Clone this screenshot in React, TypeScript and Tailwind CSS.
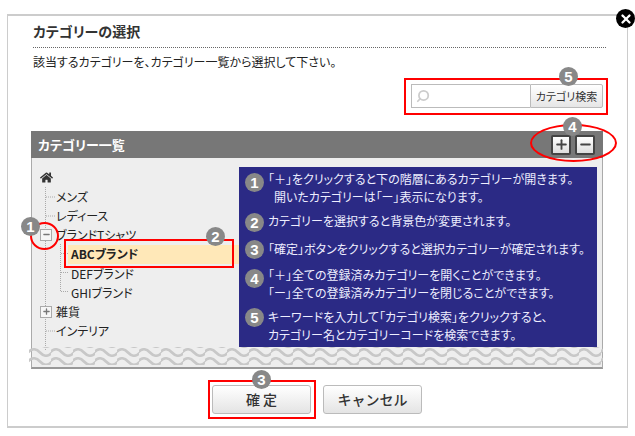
import { FaHome } from "react-icons/fa";
import { Minus, Plus, Search, X } from "lucide-react";

const font = "font-['Noto_Sans_CJK_JP','Liberation_Sans',sans-serif]";

const treeRows = [
  { label: "メンズ", depth: 0 },
  { label: "レディース", depth: 0 },
  { label: "ブランドTシャツ", depth: 0, toggle: "minus" },
  { label: "ABCブランド", depth: 1, selected: true },
  { label: "DEFブランド", depth: 1 },
  { label: "GHIブランド", depth: 1 },
  { label: "雑貨", depth: 0, toggle: "plus" },
  { label: "インテリア", depth: 0 },
];

const helpItems = [
  {
    no: 1,
    wrap: "mt-0",
    badge: "mt-[3px]",
    lines: ["「＋」をクリックすると下の階層にあるカテゴリーが開きます。", "\u2002開いたカテゴリーは「ー」表示になります。"],
  },
  { no: 2, wrap: "mt-[6px]", badge: "mt-px", lines: ["カテゴリーを選択すると背景色が変更されます。"] },
  { no: 3, wrap: "mt-[8px]", badge: "mt-0", lines: ["「確定」ボタンをクリックすると選択カテゴリーが確定されます。"] },
  {
    no: 4,
    wrap: "mt-[7px]",
    badge: "mt-[3px]",
    lines: ["「＋」全ての登録済みカテゴリーを開くことができます。", "「ー」全ての登録済みカテゴリーを閉じることができます。"],
  },
  {
    no: 5,
    wrap: "mt-[6px]",
    badge: "mt-0",
    lines: ["キーワードを入力して「カテゴリ検索」をクリックすると、", "カテゴリー名とカテゴリーコードを検索できます。"],
  },
];

const Badge = ({ no, className }: { no: number; className: string }) => (
  <span
    className={`flex h-[19px] w-[19px] shrink-0 items-center justify-center rounded-full bg-[#888] text-[15px] leading-none font-bold text-white font-['Liberation_Sans',sans-serif] ${className}`}
  >
    {no}
  </span>
);

const Waves = () => (
  <svg className="absolute bottom-0 left-[-3px]" width="574" height="20" aria-hidden="true">
    <defs>
      <pattern id="wave" width="22" height="9" patternUnits="userSpaceOnUse" patternTransform="translate(0 1)">
        <path d="M-1 4.5 Q5 -2 11 4.5 T23 4.5" fill="none" stroke="#c8c8c8" strokeWidth="2.6" />
      </pattern>
    </defs>
    <rect width="574" height="18" fill="url(#wave)" />
  </svg>
);

const TreeLines = () => (
  <svg className="absolute top-[29px] left-[13px]" width="30" height="165" aria-hidden="true">
    <g stroke="#aaa" strokeDasharray="1 1" fill="none">
      <path d="M0.5 0V164" />
      <path d="M1 10H11M1 29H11M1 144H11" />
      <path d="M15.5 57V104" />
      <path d="M16 66.5H24M16 85.5H24M16 104.5H24" />
    </g>
  </svg>
);

const App = () => {
  return (
    <div className={`relative h-[436px] w-[635px] overflow-hidden bg-white pt-[14px] pl-[7px] text-[#222] ${font}`}>
      <div className="h-[414px] w-[621px] border-2 border-x-[1px] border-[#ccc] px-[23px] pt-[5px]">
        <div className="ml-[2px] w-[573px]">
          <h2 className="h-[26px] text-[14px] leading-[20px] font-bold text-[#333] [font-feature-settings:'palt']">
            カテゴリーの選択
          </h2>
          <div className="border-t border-dotted border-[#666]" />
          <p className="mt-[5px] text-[12px] leading-[18px] [font-feature-settings:'palt']">
            該当するカテゴリーを、カテゴリー一覧から選択して下さい。
          </p>
        </div>

        <div className="mt-[13px] flex h-[24px] w-[572px] justify-end">
          <div className="flex w-[119px] items-center border border-r-0 border-[#bbb] bg-white pl-[4px]">
            <Search size={14} strokeWidth={3} className="-scale-x-100 text-[#ccc]" />
          </div>
          <button className="h-[24px] w-[73px] rounded-r-[2px] border border-[#bbb] bg-linear-to-b from-white to-[#e6e6e6] text-[11px] leading-none text-[#333] [font-feature-settings:'palt']">
            カテゴリ検索
          </button>
        </div>

        <div className="mt-[23px] flex h-[27px] w-[572px] items-center justify-between bg-[#777] pr-[8px] pl-[7px]">
          <h3 className="text-[13px] font-bold text-white [font-feature-settings:'palt']">カテゴリー一覧</h3>
          <div className="flex gap-[4px]">
            <button className="flex h-[20px] w-[20px] items-center justify-center rounded-[2px] border-2 border-[#444] bg-linear-to-b from-white to-[#ddd] text-[#444]">
              <Plus size={15} strokeWidth={3} />
            </button>
            <button className="flex h-[20px] w-[20px] items-center justify-center rounded-[2px] border-2 border-[#444] bg-linear-to-b from-white to-[#ddd] text-[#444]">
              <Minus size={15} strokeWidth={3} />
            </button>
          </div>
        </div>

        <div className="relative flex h-[211px] w-[572px] items-start border-x border-b-2 border-x-[#aaa] border-b-[#999] bg-[#eee] pt-[9px]">
          <TreeLines />
          <div className="w-[207px] shrink-0">
            <div className="flex h-[20px] items-center pl-[8px] text-[#333]">
              <FaHome size={13} />
            </div>
            <ul>
              {treeRows.map((row) => (
                <li
                  key={row.label}
                  className={`relative flex h-[19.25px] items-center text-[12px] [font-feature-settings:'palt'] ${row.depth ? "ml-[36px] pl-[3px]" : "pl-[24px]"} ${row.selected ? "bg-[#ffe8b8] font-bold" : ""}`}
                >
                  {row.toggle && (
                    <span className="absolute top-[3px] left-[8px] flex h-[12px] w-[12px] items-center justify-center border border-[#aaa] bg-[#f6f6f6] text-[#777]">
                      {row.toggle === "plus" ? <Plus size={9} strokeWidth={3.5} /> : <Minus size={9} strokeWidth={3.5} />}
                    </span>
                  )}
                  {row.label}
                </li>
              ))}
            </ul>
          </div>

          <div className="h-[180px] w-[358px] bg-[#2b2a85] pt-[3px] pl-[6px] text-[12px] leading-[18px] text-[#eef] [font-feature-settings:'palt']">
            {helpItems.map((item) => (
              <div key={item.no} className={`flex gap-[4px] ${item.wrap}`}>
                <Badge no={item.no} className={item.badge} />
                <div>
                  {item.lines.map((line) => (
                    <p key={line} className="whitespace-pre">
                      {line}
                    </p>
                  ))}
                </div>
              </div>
            ))}
          </div>
          <Waves />
        </div>

        <div className="mt-[16px] flex w-[572px] justify-center gap-[12px]">
          <button className="h-[29px] w-[99px] rounded-[3px] border border-[#bbb] bg-linear-to-b from-white to-[#e4e4e4] text-[14px] font-medium text-[#333]">
            確 定
          </button>
          <button className="h-[29px] w-[99px] rounded-[3px] border border-[#bbb] bg-linear-to-b from-white to-[#e4e4e4] text-[14px] font-medium text-[#333]">
            キャンセル
          </button>
        </div>
      </div>

      {/* close button */}
      <span className="absolute top-[9px] left-[616px] flex h-[19px] w-[19px] items-center justify-center rounded-full bg-black text-white">
        <X size={14} strokeWidth={4} />
      </span>

      {/* annotations over the dialog */}
      <div className="absolute top-[78px] left-[404px] h-[37px] w-[204px] border-2 border-[#f00]" />
      <div className="absolute top-[124px] left-[530px] h-[38px] w-[87px] rounded-[50%] border-2 border-[#f00]" />
      <div className="absolute top-[222px] left-[30px] h-[28px] w-[29px] rounded-[50%] border-2 border-[#f00]" />
      <div className="absolute top-[239px] left-[64px] h-[29px] w-[170px] border-2 border-[#f00]" />
      <div className="absolute top-[380px] left-[208px] h-[39px] w-[108px] border-2 border-[#f00]" />
      <Badge no={5} className="absolute top-[67px] left-[559px]" />
      <Badge no={4} className="absolute top-[117px] left-[563px]" />
      <Badge no={1} className="absolute top-[217px] left-[21px]" />
      <Badge no={2} className="absolute top-[227px] left-[206px]" />
      <Badge no={3} className="absolute top-[370px] left-[252px]" />
    </div>
  );
};

export default App;
